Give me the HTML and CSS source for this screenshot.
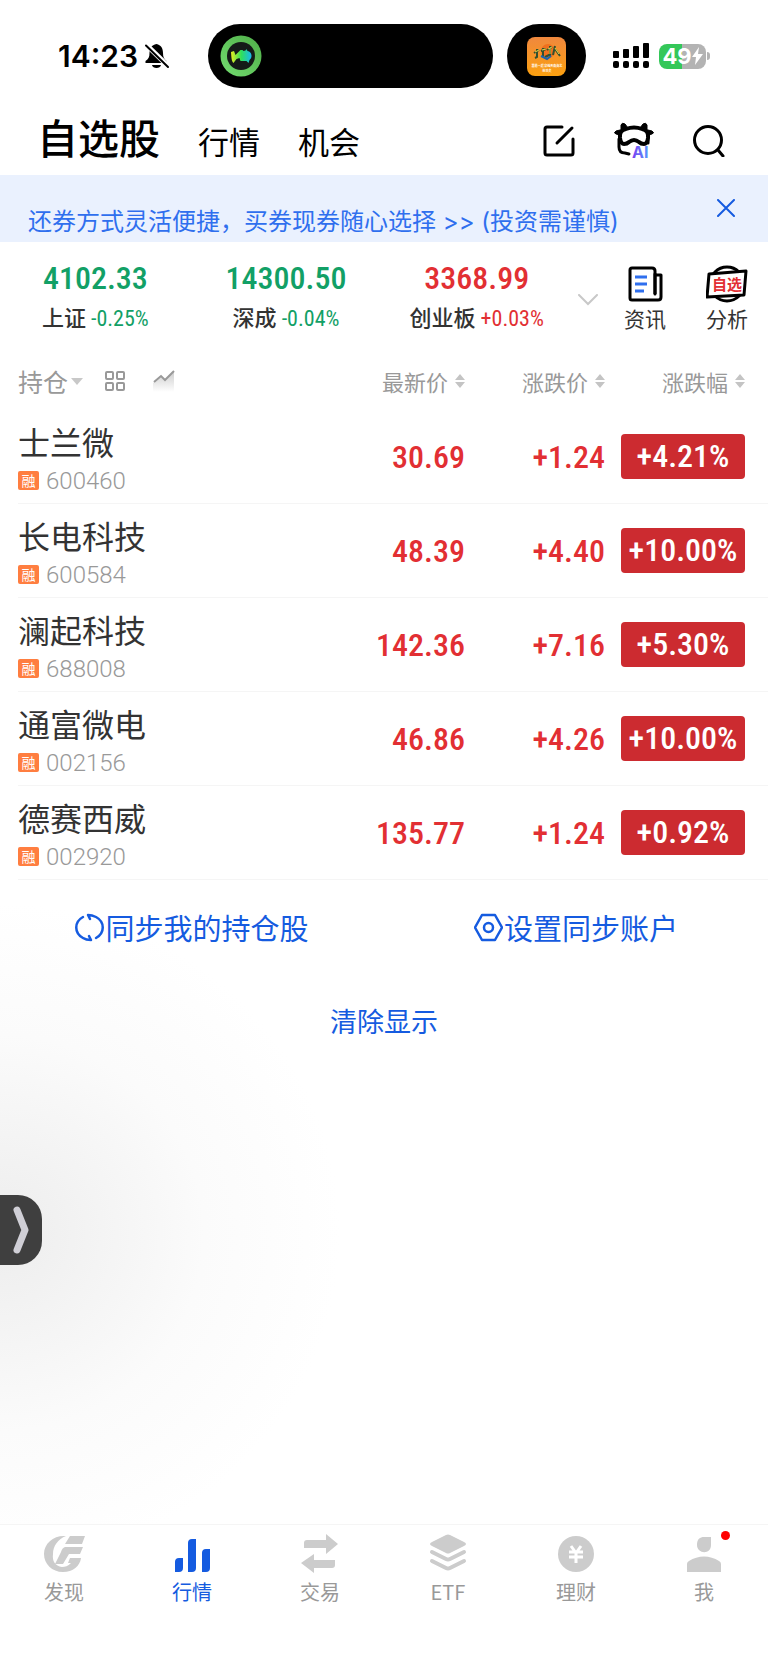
FILE: index.html
```html
<!DOCTYPE html>
<html lang="zh-CN">
<head>
  <meta charset="UTF-8" />
  <meta name="viewport" content="width=device-width, initial-scale=1.0" />
  <title>自选股</title>
  <link rel="stylesheet" href="styles.css">
</head>
<body>
  <div class="statusbar">
    <div class="time">
      <span>14:23</span>
      <svg width="26" height="26" viewBox="0 0 26 26">
        <path d="M12.500 1c-5 1-7 4-7 9 0 4-1 6-4 8v2h21v-2c-2.500-2-3.500-4-3.500-8 0-5-2-8-6.500-9z" />
        <path d="M8 22h9c-.5 4-8.500 4-9 0z" />
        <path d="M2 1.500 25 24" stroke="#fff" stroke-width="5" />
        <path d="M2 2.500 24 24" stroke="#000" stroke-width="2" stroke-linecap="round" />
      </svg>
    </div>
    <div class="island">
      <svg width="42" height="42" viewBox="0 0 42 42">
        <defs>
          <linearGradient id="ring" x1="0" y1="1" x2="1" y2="0">
            <stop offset="0" stop-color="#73dc70" /><stop offset="1" stop-color="#4fae48" />
          </linearGradient>
          <linearGradient id="fish">
            <stop offset="0" stop-color="#e8f020" /><stop offset=".5" stop-color="#2fe05a" /><stop offset="1" stop-color="#17b8f0" />
          </linearGradient>
        </defs>
        <circle cx="21" cy="21" r="20.500" fill="url(#ring)" />
        <circle cx="21" cy="21" r="14" fill="#151a18" />
        <path d="M11 17l3-1 1.500 4 5-5 2 0 1 1 2-.5 1-1.500 1 2c5 1 5 7 2 9l-1 3-2-2-6 0-1-3-3 1-3 4c-2-2-2-5-2.500-11z" fill="url(#fish)" />
      </svg>
    </div>
    <div class="island island-small">
      <svg width="39" height="39" viewBox="0 0 39 39">
        <defs>
          <linearGradient id="app" x1="0" y1="0" x2="0" y2="1">
            <stop offset="0" stop-color="#f0883e" /><stop offset="1" stop-color="#fba010" />
          </linearGradient>
        </defs>
        <rect width="39" height="39" rx="8" fill="url(#app)" />
        <circle cx="21" cy="14" r="7" fill="#f0701e" />
        <path d="M7 16l5-3M10 12v8l-2 1M14 14l5-2M16 11v9M20 13l5-3M23 9v10M18 20l6-3M28 9l-2 9M28 12l5 7" fill="none" stroke="#31502f" stroke-width="2" />
        <path d="M8 15l4-2M15 13l4-1M21 12l4-2M28 11l4 6M23 11v6" fill="none" stroke="#e8d84a" stroke-width="1" />
        <path d="M14 19l6 3 4-3" fill="none" stroke="#1c63ae" stroke-width="2" />
        <text x="20" y="30" class="app-text">跟着一起 穿越天南海北</text>
        <text x="20" y="35" class="app-text">练功夫</text>
      </svg>
    </div>
    <svg class="signal" width="36" height="26" viewBox="0 0 36 26">
      <rect x="0" y="8" width="6" height="7" rx="1" /><rect x="10" y="6" width="6" height="9" rx="1" />
      <rect x="20" y="3" width="6" height="12" rx="1" /><rect x="30" y="0" width="6" height="15" rx="1" />
      <rect x="0" y="18" width="6" height="7" rx="2" /><rect x="10" y="18" width="6" height="7" rx="2" />
      <rect x="20" y="18" width="6" height="7" rx="2" /><rect x="30" y="18" width="6" height="7" rx="2" />
    </svg>
    <div class="battery">
      <span>49</span>
      <svg width="11" height="18" viewBox="0 0 11 18"><path d="M7 0 0 10h4L3 18l8-11H6z" fill="#fff" /></svg>
    </div>
  </div>

  <header class="header">
    <nav class="sections">
      <a href="#" class="current">自选股</a>
      <a href="#">行情</a>
      <a href="#">机会</a>
    </nav>
    <div class="tools">
      <button aria-label="编辑">
        <svg width="32" height="32" viewBox="0 0 32 32" fill="none" stroke="#000" stroke-width="3" stroke-linecap="round" stroke-linejoin="round">
          <path d="M19 2H4Q2 2 2 4v24q0 2 2 2h24q2 0 2-2V14M14 18 29 3" />
        </svg>
      </button>
      <button aria-label="AI助手">
        <svg width="40" height="38" viewBox="0 0 40 38">
          <defs>
            <linearGradient id="ai"><stop offset="0" stop-color="#7a3ff0" /><stop offset="1" stop-color="#5599ff" /></linearGradient>
          </defs>
          <path d="M7 8V3q1-3 4-1l3 4M33 8V3q-1-3-4-1l-3 4M6 8l-4 1q-3 2 0 3l4 1M34 8l4 1q3 2 0 3l-4 1" stroke="#000" stroke-width="1" />
          <path d="M12 7q8-3 16 0 7 1 6 9-1 6-4 6-3 0-5-2-5-4-10 0-2 2-5 2-3 0-4-6-1-8 6-9z" fill="#fff" stroke="#000" stroke-width="4" stroke-linejoin="round" />
          <path d="M5 17v8q0 6 6 6l4 1" fill="none" stroke="#000" stroke-width="3" stroke-linecap="round" />
          <path d="M34 16v5" stroke="#000" stroke-width="3" stroke-linecap="round" />
          <text x="18" y="36" class="ai-text">AI</text>
        </svg>
      </button>
      <button aria-label="搜索">
        <svg width="32" height="32" viewBox="0 0 32 32" fill="none" stroke="#000" stroke-width="3" stroke-linecap="round">
          <circle cx="15" cy="15" r="13.500" /><path d="M25 25l5 6" />
        </svg>
      </button>
    </div>
  </header>

  <div class="banner">
    <a href="#">还券方式灵活便捷，买券现券随心选择 &gt;&gt; (投资需谨慎)</a>
    <button aria-label="关闭">
      <svg width="18" height="18" viewBox="0 0 18 18" stroke="#155be0" stroke-width="2" stroke-linecap="round"><path d="M1 1l16 16M17 1 1 17" /></svg>
    </button>
  </div>

  <section class="indices">
    <div class="index down">
      <strong>4102.33</strong>
      <p><b>上证</b> -0.25%</p>
    </div>
    <div class="index down">
      <strong>14300.50</strong>
      <p><b>深成</b> -0.04%</p>
    </div>
    <div class="index up">
      <strong>3368.99</strong>
      <p><b>创业板</b> +0.03%</p>
    </div>
    <button class="more" aria-label="展开">
      <svg width="20" height="12" viewBox="0 0 20 12" fill="none" stroke="#c8c8c8" stroke-width="2" stroke-linecap="round"><path d="M1 1l9 9 9-9" /></svg>
    </button>
    <a href="#" class="entry">
      <svg width="42" height="38" viewBox="0 0 42 38" fill="none" stroke="#000" stroke-width="3" stroke-linejoin="round">
        <path d="M31 29V6q0-3-3-3H8Q6 3 6 5v28q0 2 2 2h26q3 0 3-3V10h-5" />
        <path d="M31 9v20" stroke-linecap="round" />
        <path d="M11 12h12M11 19h12M11 26h9" stroke="#2f6fee" />
      </svg>
      <span>资讯</span>
    </a>
    <a href="#" class="entry">
      <svg width="42" height="38" viewBox="0 0 42 38">
        <circle cx="21" cy="19" r="17" fill="#fff" stroke="#000" stroke-width="3" />
        <path d="M3 9l37-3-2 24-37 2z" fill="#fff" stroke="#000" stroke-width="3" stroke-linejoin="round" />
        <text x="21" y="25" class="stamp-text">自选</text>
      </svg>
      <span>分析</span>
    </a>
  </section>

  <main>
    <table class="stocks">
      <thead>
        <tr>
          <th class="filter">
            <div>
              <button class="hold">持仓<i class="caret"></i></button>
              <button aria-label="宫格">
                <svg width="20" height="20" viewBox="0 0 20 20" fill="none" stroke="#999" stroke-width="2">
                  <rect x="1" y="1" width="7" height="7" rx="1" /><rect x="12" y="1" width="7" height="7" rx="1" />
                  <rect x="1" y="12" width="7" height="7" rx="1" /><rect x="12" y="12" width="7" height="7" rx="1" />
                </svg>
              </button>
              <button aria-label="走势">
                <svg width="22" height="22" viewBox="0 0 22 22">
                  <defs>
                    <linearGradient id="fade" x1="0" y1="0" x2="0" y2="1"><stop offset="0" stop-color="#ccc" /><stop offset="1" stop-color="#fff" /></linearGradient>
                  </defs>
                  <path d="M0 13l7-7 5 4L21 1v21H0z" fill="url(#fade)" />
                  <path d="M1 12l7-6 4 4 9-9" fill="none" stroke="#999" stroke-width="2" />
                </svg>
              </button>
            </div>
          </th>
          <th><button>最新价<i class="sort"></i></button></th>
          <th><button>涨跌价<i class="sort"></i></button></th>
          <th><button>涨跌幅<i class="sort"></i></button></th>
        </tr>
      </thead>
      <tbody>
        <tr>
          <td><h2>士兰微</h2><p><em>融</em>600460</p></td>
          <td>30.69</td>
          <td>+1.24</td>
          <td><span class="pill">+4.21%</span></td>
        </tr>
        <tr>
          <td><h2>长电科技</h2><p><em>融</em>600584</p></td>
          <td>48.39</td>
          <td>+4.40</td>
          <td><span class="pill">+10.00%</span></td>
        </tr>
        <tr>
          <td><h2>澜起科技</h2><p><em>融</em>688008</p></td>
          <td>142.36</td>
          <td>+7.16</td>
          <td><span class="pill">+5.30%</span></td>
        </tr>
        <tr>
          <td><h2>通富微电</h2><p><em>融</em>002156</p></td>
          <td>46.86</td>
          <td>+4.26</td>
          <td><span class="pill">+10.00%</span></td>
        </tr>
        <tr>
          <td><h2>德赛西威</h2><p><em>融</em>002920</p></td>
          <td>135.77</td>
          <td>+1.24</td>
          <td><span class="pill">+0.92%</span></td>
        </tr>
      </tbody>
    </table>

    <div class="sync">
      <a href="#">
        <svg width="29" height="29" viewBox="0 0 29 29" fill="none" stroke="#155be0" stroke-width="2.500" stroke-linecap="round" stroke-linejoin="round">
          <path d="M8 4C-1 9-1 20 8 25q3 2 8 2l-2-4M21 25c9-5 9-16 0-21q-4-2-8-2l2 4" />
        </svg>同步我的持仓股
      </a>
      <a href="#">
        <svg width="29" height="29" viewBox="0 0 29 29" fill="none" stroke="#155be0" stroke-width="2.500" stroke-linejoin="round">
          <path d="M8 2h13l7 12.500L21 27H8L1 14.500z" /><circle cx="14.500" cy="14.500" r="4.500" />
        </svg>设置同步账户
      </a>
    </div>
    <button class="clear">清除显示</button>
    <button class="drawer" aria-label="展开侧栏">
      <svg width="16" height="48" viewBox="0 0 16 48" fill="none" stroke="#d0cfd6" stroke-width="7" stroke-linecap="round" stroke-linejoin="round"><path d="M4 4l8 20-8 20" /></svg>
    </button>
  </main>

  <nav class="tabbar">
    <a href="#">
      <svg width="42" height="40" viewBox="0 0 42 40">
        <path d="M23 2C11 1 1 9 1 20c0 10 8 18 19 18 10 0 17-6 18-14H27l-2 5h3c-3 3-6 4-9 4-7-1-10-6-9-13C10 12 15 5 23 2z" />
        <path d="M27 2h15l-3 8H22zM22 13h18l-3 7H26l-6 10h-8l6-12q1-4 4-5z" />
      </svg>
      发现
    </a>
    <a href="#" class="active">
      <svg width="42" height="40" viewBox="0 0 42 40">
        <path d="M4 28q0-4 4-4h4v10q0 4-4 4H4zM17 9q0-4 4-4h4v29q0 4-4 4h-4zM31 19q0-4 4-4h4v19q0 4-4 4h-4z" />
      </svg>
      行情
    </a>
    <a href="#">
      <svg width="42" height="40" viewBox="0 0 42 40">
        <path d="M6 6h21V0l12 10-12 10v-6H5V9q0-3 3-3zM36 34H15v5L2 29l13-9v6h21v5q0 3-3 3z" />
      </svg>
      交易
    </a>
    <a href="#">
      <svg width="42" height="40" viewBox="0 0 42 40">
        <path d="M19 1q2-1 4 0l14 7q4 2 0 4l-14 7q-2 1-4 0L5 12q-4-2 0-4z" />
        <path d="M5 18l14 7q2 1 4 0l14-7M5 27l14 7q2 1 4 0l14-7" fill="none" stroke="#ccc" stroke-width="4" stroke-linecap="round" />
      </svg>
      ETF
    </a>
    <a href="#">
      <svg width="42" height="40" viewBox="0 0 42 40">
        <circle cx="21" cy="20" r="18" />
        <path d="M16 12l5 7M26 12l-5 7M14 18h14M14 23h14M21 18v11" fill="none" stroke="#fff" stroke-width="3" />
      </svg>
      理财
    </a>
    <a href="#">
      <svg width="42" height="40" viewBox="0 0 42 40">
        <path d="M28 3v8c0 10-14 9-14 0 0-6 3-8 7-8zM4 38V30q0-2 2-3c9-6 21-6 30 0q2 1 2 3v8z" />
      </svg>
      我
      <i class="dot"></i>
    </a>
  </nav>
</body>
</html>
```
FILE: styles.css
```css
* {
  box-sizing: border-box;
  margin: 0;
  padding: 0;
}

body {
  min-height: 100vh;
  display: flex;
  flex-direction: column;
  font-family: "Noto Sans CJK SC", sans-serif;
  color: #333;
  background: #fff;
}

a {
  color: inherit;
  text-decoration: none;
}

button {
  font: inherit;
  color: inherit;
  background: none;
  border: none;
  cursor: pointer;
}

svg {
  display: block;
  flex: none;
}

i, em {
  font-style: normal;
}

.statusbar {
  display: flex;
  align-items: center;
  height: 112px;
  padding-left: 58px;
}

.time {
  display: flex;
  align-items: center;
  gap: 6px;
  width: 150px;
  font: 600 30px/36px Inter, sans-serif;
  color: #000;
}

.island {
  display: flex;
  align-items: center;
  width: 285px;
  height: 64px;
  padding-left: 12px;
  border-radius: 32px;
  background: #000;
}

.island-small {
  justify-content: center;
  width: 79px;
  margin-left: 14px;
  padding: 0;
}

.app-text {
  font-size: 3px;
  font-weight: 700;
  fill: #fff;
  text-anchor: middle;
}

.signal {
  margin-left: 27px;
}

.battery {
  position: relative;
  display: flex;
  align-items: center;
  justify-content: center;
  width: 47px;
  height: 25px;
  margin-left: 10px;
  border-radius: 8px;
  background: linear-gradient(90deg, #34c759 49%, #b3b3b3 49%);
  font: 700 22px/25px Inter, sans-serif;
  color: #fff;
}

.battery::after {
  content: "";
  position: absolute;
  right: -4px;
  width: 3px;
  height: 8px;
  border-radius: 0 4px 4px 0;
  background: #b3b3b3;
}

.header {
  display: flex;
  align-items: center;
  justify-content: space-between;
  height: 63px;
  padding: 0 43px 6px 37px;
  color: #000;
}

.sections {
  display: flex;
  align-items: baseline;
  gap: 38px;
  padding-bottom: 4px;
  font-size: 31px;
  line-height: 56px;
}

.sections .current {
  font-size: 41px;
  font-weight: 500;
}

.tools {
  display: flex;
  align-items: center;
  gap: 39px;
}

.ai-text {
  font: 700 16px Inter, sans-serif;
  fill: url(#ai);
}

.banner {
  display: flex;
  justify-content: space-between;
  height: 67px;
  padding: 24px 33px 0 28px;
  background: #eaf1fe;
  color: #2f6fee;
  font-family: Inter, "Noto Sans CJK SC", sans-serif;
  font-size: 24px;
  line-height: 46px;
}

.banner button {
  align-self: flex-start;
}

.indices {
  display: flex;
  height: 102px;
  padding-top: 14px;
}

.index {
  flex: 1;
  text-align: center;
  white-space: nowrap;
  font-family: "Roboto Condensed", "Liberation Sans Narrow", Roboto, "Noto Sans CJK SC", sans-serif;
}

.index strong {
  display: block;
  font-size: 32px;
  font-weight: 500;
  line-height: 44px;
}

.index p {
  font-size: 22px;
  line-height: 32px;
}

.index b {
  font-family: "Noto Sans CJK SC", sans-serif;
  font-weight: 500;
  color: #333;
}

.down {
  color: #12a066;
}

.up {
  color: #e22f33;
}

.more {
  width: 32px;
  padding-left: 6px;
}

.entry {
  display: flex;
  flex-direction: column;
  align-items: center;
  width: 82px;
  padding-top: 9px;
  font-size: 21px;
  line-height: 30px;
}

.stamp-text {
  font-size: 15px;
  font-weight: 700;
  fill: #e22f33;
  text-anchor: middle;
}

main {
  position: relative;
  flex: 1;
  background: radial-gradient(340px 330px at 0 889px, #ededed, #fbfbfb 60%, #fff);
}

.stocks {
  width: 100%;
  padding-left: 18px;
  border-spacing: 0;
  background: #fff;
}

.stocks th {
  height: 66px;
  padding-top: 8px;
  text-align: right;
  font-size: 22px;
  font-weight: 400;
  color: #999;
}

.stocks th:nth-child(n+2),
.stocks td:nth-child(n+2) {
  width: 140px;
}

.stocks th:last-child,
.stocks td:last-child {
  width: 163px;
  padding-right: 23px;
}

.stocks th button {
  display: inline-flex;
  align-items: center;
  white-space: nowrap;
}

.filter div {
  display: flex;
  align-items: center;
  gap: 28px;
}

.filter .hold {
  margin-right: -6px;
  font-size: 25px;
}

.caret {
  margin-left: 3px;
  border: 6px solid transparent;
  border-top: 7px solid #c8c8c8;
  border-bottom: none;
}

.sort {
  width: 10px;
  height: 14px;
  margin-left: 7px;
  background: #c4c4c4;
  clip-path: polygon(50% 0, 100% 43%, 0 43%, 0 57%, 100% 57%, 50% 100%, 0 57%, 0 43%);
}

.stocks td {
  height: 94px;
  border-bottom: 1px solid #f5f5f5;
  text-align: right;
  font: 500 32px/44px "Roboto Condensed", "Liberation Sans Narrow", Roboto, sans-serif;
  color: #e22f33;
}

.stocks td:first-child {
  padding-top: 4px;
  text-align: left;
  font-family: Roboto, "Noto Sans CJK SC", sans-serif;
}

.stocks h2 {
  font: 400 32px/44px "Noto Sans CJK SC", sans-serif;
  color: #333;
}

.stocks p {
  display: flex;
  align-items: center;
  gap: 7px;
  font-size: 24px;
  font-weight: 300;
  line-height: 36px;
  color: #999;
}

.stocks em {
  width: 21px;
  border-radius: 2px;
  background: #ff7e40;
  color: #fff;
  font: 400 14px/19px "Noto Sans CJK SC", sans-serif;
  text-align: center;
}

.pill {
  display: block;
  height: 45px;
  margin-left: 16px;
  border-radius: 4px;
  background: #cc2b30;
  color: #fff;
  text-align: center;
  line-height: 45px;
}

.sync {
  display: flex;
  padding: 25px 0;
  color: #155be0;
  font-size: 29px;
  line-height: 44px;
}

.sync a {
  flex: 1;
  display: flex;
  align-items: center;
  justify-content: center;
  gap: 1px;
}

.clear {
  display: block;
  margin: 25px auto 0;
  color: #155be0;
  font-size: 27px;
  line-height: 44px;
}

.drawer {
  position: absolute;
  left: 0;
  top: 851px;
  display: flex;
  align-items: center;
  width: 42px;
  height: 70px;
  padding-left: 13px;
  border-radius: 0 24px 24px 0;
  background: #3f3f3f;
}

.tabbar {
  display: flex;
  height: 145px;
  padding-top: 9px;
  border-top: 1px solid #f5f5f5;
}

.tabbar a {
  position: relative;
  flex: 1;
  display: flex;
  flex-direction: column;
  align-items: center;
  gap: 3px;
  color: #999;
  font-size: 20px;
  line-height: 30px;
  fill: #ccc;
}

.tabbar .active {
  color: #155be0;
  fill: #155be0;
}

.dot {
  position: absolute;
  top: -3px;
  left: calc(50% + 17px);
  width: 9px;
  height: 9px;
  border-radius: 50%;
  background: #f00;
}
```
